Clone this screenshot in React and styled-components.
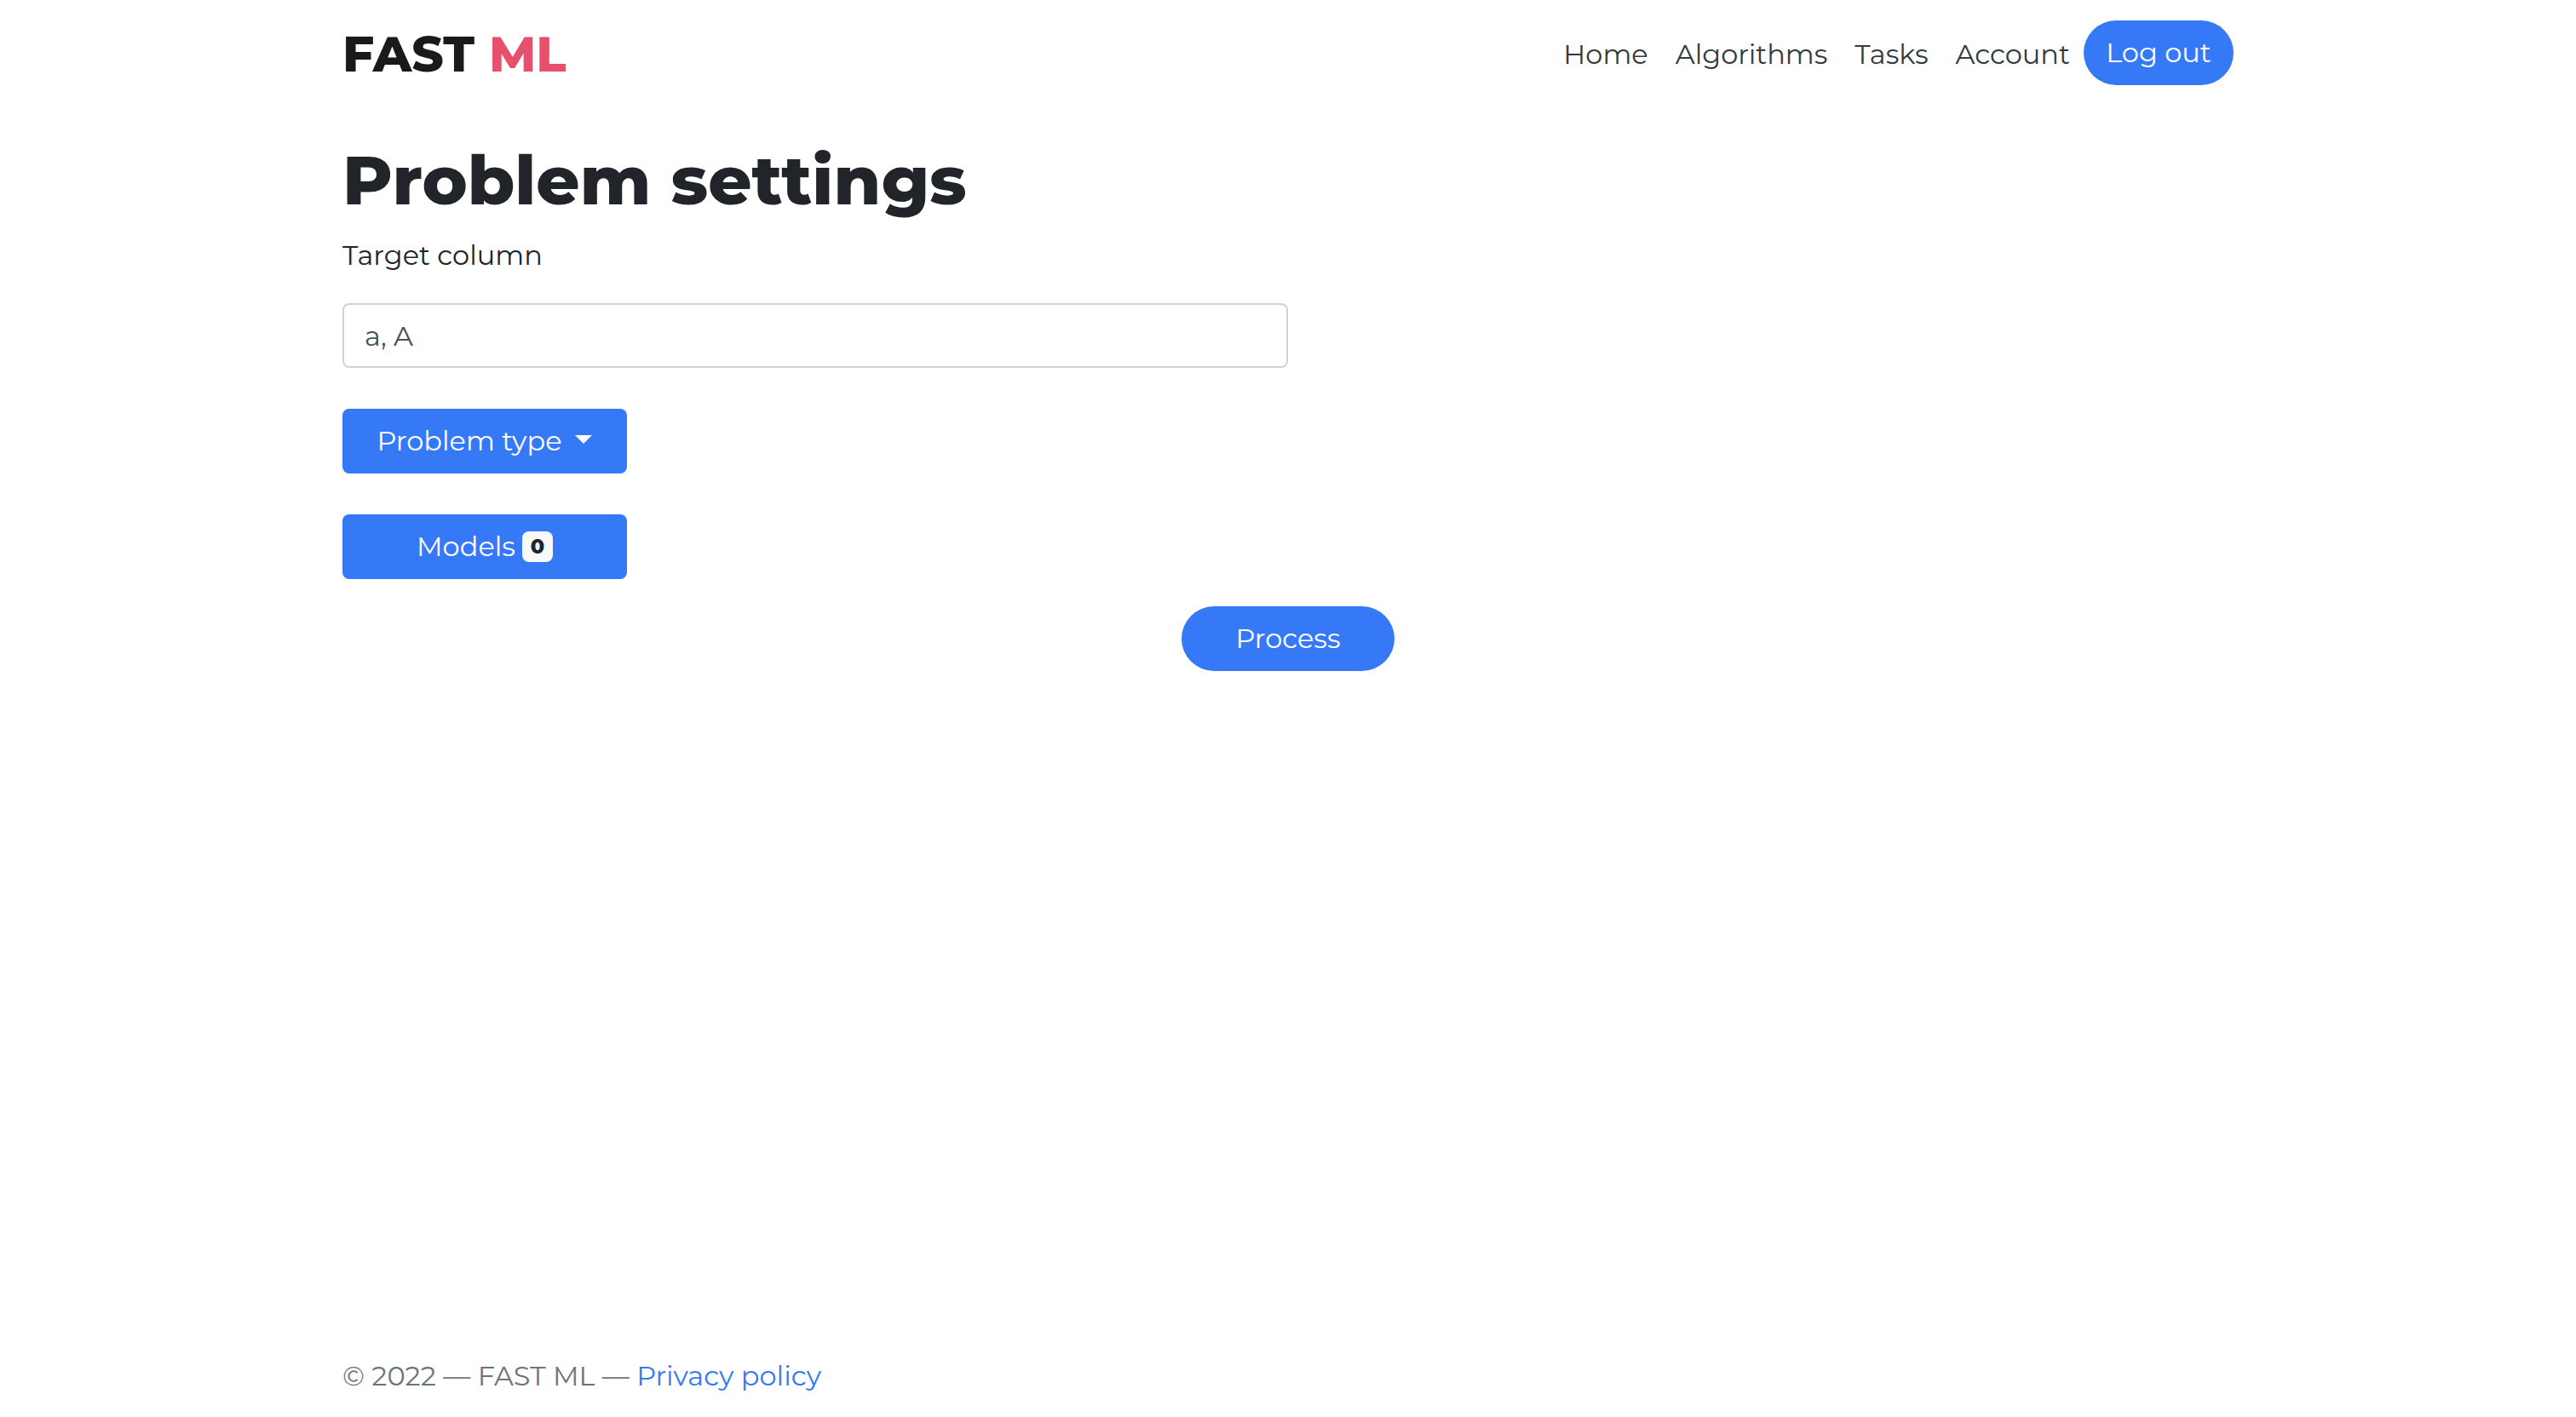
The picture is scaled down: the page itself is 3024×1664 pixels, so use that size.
import React from "react";
import styled, { createGlobalStyle, css } from "styled-components";

const GlobalStyle = createGlobalStyle`
  *, *::before, *::after { box-sizing: border-box; }
  body {
    margin: 0;
    background: #fff;
    color: #212529;
    font-family: Montserrat, Inter, "Liberation Sans", sans-serif;
    font-size: 32px;
    line-height: 48px;
  }
`;

const Page = styled.div`
  display: flex;
  flex-direction: column;
  min-height: 100vh;
`;

const container = css`
  width: 100%;
  max-width: 2280px;
  margin: 0 auto;
  padding-left: 30px;
  padding-right: 30px;
`;

const Header = styled.header`
  ${container}
  display: flex;
  align-items: center;
  justify-content: space-between;
  padding-top: 24px;
  padding-bottom: 24px;
`;

const Brand = styled.a`
  color: #1a1a1a;
  font-size: 58px;
  font-weight: 800;
  line-height: 80px;
  text-decoration: none;
`;

const BrandAccent = styled.span`
  color: #e6506c;
`;

const Nav = styled.nav`
  display: flex;
  align-items: flex-start;
`;

const NavLink = styled.a`
  padding: 16px;
  color: #343a40;
  text-decoration: none;
`;

const Button = styled.button`
  display: inline-flex;
  align-items: center;
  justify-content: center;
  height: 76px;
  width: ${(p) => p.$width};
  padding: 0 24px;
  border: 0;
  border-radius: ${(p) => (p.$pill ? "38px" : "8px")};
  background: #3579f6;
  color: #fff;
  font: inherit;
  cursor: pointer;
`;

const Main = styled.main`
  ${container}
  flex: 1;
  padding-top: 36px;
`;

const Title = styled.h1`
  margin: 0 0 16px;
  font-size: 80px;
  font-weight: 800;
  line-height: 96px;
`;

const Form = styled.form`
  display: flex;
  flex-direction: column;
  align-items: flex-start;
`;

const Label = styled.label`
  margin-bottom: 32px;
`;

const TextInput = styled.input`
  width: 50%;
  height: 76px;
  margin-bottom: 48px;
  padding: 0 24px;
  border: 2px solid #ced4da;
  border-radius: 8px;
  background: #fff;
  color: #495057;
  font: inherit;
`;

const Choices = styled.div`
  display: flex;
  flex-direction: column;
  gap: 48px;
  margin-bottom: 32px;
`;

const Caret = styled.span`
  margin: 0 0 4px 16px;
  border-top: 10px solid currentColor;
  border-left: 10px solid transparent;
  border-right: 10px solid transparent;
`;

const Badge = styled.span`
  min-width: 36px;
  margin-left: 8px;
  padding: 6px 8px;
  border-radius: 8px;
  background: #f8f9fa;
  color: #212529;
  font-size: 24px;
  font-weight: 800;
  line-height: 24px;
  text-align: center;
`;

const Actions = styled.div`
  display: flex;
  justify-content: center;
  width: 100%;
`;

const Footer = styled.footer`
  ${container}
  padding-bottom: 24px;
  color: #6c757d;
`;

const FooterLink = styled.a`
  color: #3579f6;
  text-decoration: none;
`;

const links = ["Home", "Algorithms", "Tasks", "Account"];

export default function App() {
  return (
    <Page>
      <GlobalStyle />
      <Header>
        <Brand href="#">
          FAST <BrandAccent>ML</BrandAccent>
        </Brand>
        <Nav>
          {links.map((name) => (
            <NavLink key={name} href="#">{name}</NavLink>
          ))}
          <Button type="button" $pill $width="176px">Log out</Button>
        </Nav>
      </Header>
      <Main>
        <Title>Problem settings</Title>
        <Form onSubmit={(e) => e.preventDefault()}>
          <Label htmlFor="target">Target column</Label>
          <TextInput id="target" type="text" defaultValue="a, A" />
          <Choices>
            <Button type="button" aria-haspopup="menu" $width="334px">
              Problem type
              <Caret />
            </Button>
            <Button type="button" $width="334px">
              Models
              <Badge>0</Badge>
            </Button>
          </Choices>
          <Actions>
            <Button type="submit" $pill $width="250px">Process</Button>
          </Actions>
        </Form>
      </Main>
      <Footer>
        © 2022 — FAST ML — <FooterLink href="#">Privacy policy</FooterLink>
      </Footer>
    </Page>
  );
}
